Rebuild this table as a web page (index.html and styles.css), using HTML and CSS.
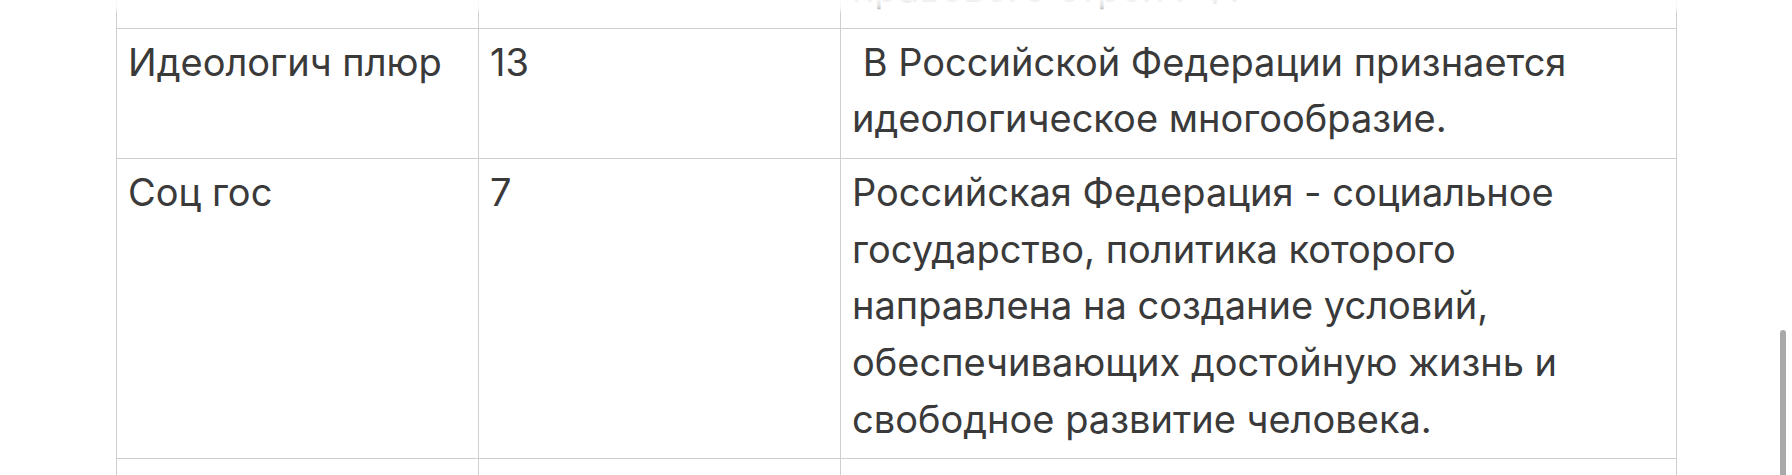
FILE: index.html
```html
<!DOCTYPE html>
<html lang="ru">
<head>
<meta charset="utf-8">
<title>Таблица</title>
<link rel="stylesheet" href="styles.css">
</head>
<body>
<div class="page">
  <table class="grid">
    <colgroup>
      <col class="c1"><col class="c2"><col class="c3">
    </colgroup>
    <tbody>
      <tr>
        <td></td>
        <td></td>
        <td>правового строя РФ.</td>
      </tr>
      <tr>
        <td>Идеологич плюр</td>
        <td>13</td>
        <td>&nbsp;В Российской Федерации признается идеологическое многообразие.</td>
      </tr>
      <tr>
        <td>Соц гос</td>
        <td>7</td>
        <td>Российская Федерация - социальное государство, политика которого направлена на создание условий, обеспечивающих достойную жизнь и свободное развитие человека.</td>
      </tr>
      <tr>
        <td>Светское гос</td>
        <td>14</td>
        <td>Российская Федерация - светское государство.</td>
      </tr>
    </tbody>
  </table>
  <div class="top-fade"></div>
  <div class="scroll-thumb"></div>
</div>
</body>
</html>
```
FILE: styles.css
```css
html, body {
  margin: 0;
  padding: 0;
  background: #ffffff;
  overflow: hidden;
  height: 475px;
}

.page {
  position: relative;
  height: 475px;
  overflow: hidden;
  padding-left: 116px;
}

.grid {
  border-collapse: collapse;
  table-layout: fixed;
  width: 1560px;
  margin-top: -46px;
  font-family: Inter, "Noto Sans", sans-serif;
  font-size: 38px;
  line-height: 56.67px;
  color: #3a3a3a;
}

.c1 { width: 362px; }
.c2 { width: 362px; }
.c3 { width: 836px; }

.grid td {
  border: 1px solid #cfcfcf;
  padding: 5px 11px 11px 11px;
  vertical-align: top;
  text-align: left;
}

.top-fade {
  position: absolute;
  top: 0;
  left: 0;
  right: 0;
  height: 13px;
  background: linear-gradient(to bottom, rgba(255,255,255,0.94) 0, rgba(255,255,255,0.86) 6px, rgba(255,255,255,0.6) 10px, rgba(255,255,255,0) 13px);
  pointer-events: none;
}

.scroll-thumb {
  position: absolute;
  left: 1780px;
  top: 330px;
  width: 6px;
  height: 170px;
  border-radius: 3px;
  background: #a9a9a9;
}
```
